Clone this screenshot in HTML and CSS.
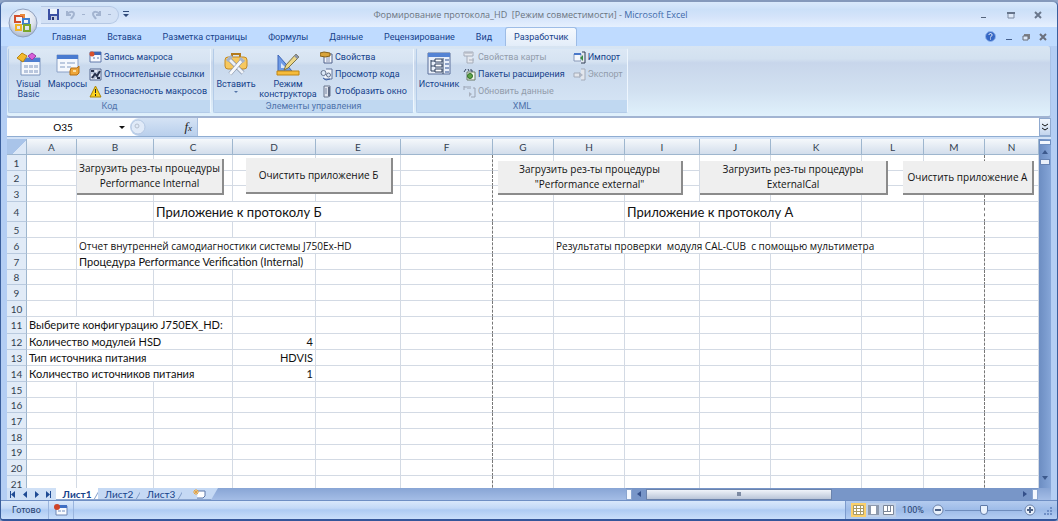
FILE: index.html
```html
<!DOCTYPE html>
<html lang="ru">

<head>
  <meta charset="UTF-8" />
  <meta name="viewport" content="width=device-width, initial-scale=1.0" />
  <title>Формирование протокола_HD - Microsoft Excel</title>
  <link rel="stylesheet" href="styles.css">
</head>

<body>
  <div class="window">
    <button class="office" aria-label="Office">
      <svg width="30" height="30" viewBox="0 0 30 30">
        <defs>
          <radialGradient id="orb" cx="50%" cy="30%" r="70%">
            <stop offset="0" stop-color="#fff" />
            <stop offset="0.6" stop-color="#dfe4ee" />
            <stop offset="1" stop-color="#a9b6cd" />
          </radialGradient>
        </defs>
        <circle cx="15" cy="15" r="14" fill="url(#orb)" stroke="#8d9fbe" />
        <g fill="none" stroke-width="2">
          <path d="M13 14H7V8h8v3" stroke="#d2502c" />
          <path d="M12 7h4v4" stroke="#e8893a" />
          <rect x="15" y="11" width="6" height="5" stroke="#3f7fcf" />
          <rect x="8" y="17" width="5" height="5" stroke="#f0b429" />
          <rect x="16" y="17" width="6" height="6" stroke="#7aa62c" />
        </g>
      </svg>
    </button>

    <header class="titlebar">
      <div class="quick">
        <button aria-label="Сохранить"><svg width="11" height="11" viewBox="0 0 11 11">
            <path d="M0 0h11v11H0z" fill="#3b4fa3" />
            <path d="M2 0h7v5H2z" fill="#eef3fc" />
            <path d="M3 7h6v4H3z" fill="#c5cce0" />
            <path d="M4 8h2v3H4z" fill="#27326f" />
          </svg></button>
        <button aria-label="Отменить"><svg width="11" height="11" viewBox="0 0 11 11">
            <path d="M2 2v4h4M2 6c2-4 7-4 7-1 0 2-2 3-3 5" fill="none" stroke="#a3b4d0" stroke-width="2" />
          </svg></button>
        <i class="dot"></i>
        <button aria-label="Вернуть"><svg width="11" height="11" viewBox="0 0 11 11">
            <path d="M9 2v4H5M9 6C7 2 2 2 2 5c0 2 2 3 3 5" fill="none" stroke="#a3b4d0" stroke-width="2" />
          </svg></button>
        <i class="dot"></i>
      </div>
      <button class="quick-more" aria-label="Настройка панели"><svg width="6" height="7" viewBox="0 0 6 7">
          <path d="M0 0h6v1H0zM0 3h6L3 6z" fill="#2f4a7a" />
        </svg></button>
      <h1>Формирование протокола_HD&nbsp; [Режим совместимости] - <span>Microsoft Excel</span></h1>
      <div class="win-buttons">
        <button aria-label="Свернуть"><svg width="8" height="8" viewBox="0 0 8 8">
            <path d="M1 6h5v1H1z" fill="#56657c" />
          </svg></button>
        <button aria-label="Развернуть"><svg width="8" height="8" viewBox="0 0 8 8">
            <path d="M1 2h6v5H1z" fill="#dfe9f8" stroke="#7c8aa0" />
            <path d="M0 1h8v2H0z" fill="#66748a" />
          </svg></button>
        <button aria-label="Закрыть"><svg width="8" height="8" viewBox="0 0 8 8">
            <path d="M1 1l6 6M7 1L1 7" stroke="#6a778c" stroke-width="2" />
          </svg></button>
      </div>
    </header>

    <nav class="tabs">
      <button>Главная</button>
      <button>Вставка</button>
      <button>Разметка страницы</button>
      <button>Формулы</button>
      <button>Данные</button>
      <button>Рецензирование</button>
      <button>Вид</button>
      <button class="active">Разработчик</button>
      <div class="doc-buttons">
        <button aria-label="Справка"><svg width="11" height="11" viewBox="0 0 11 11">
            <circle cx="5.500" cy="5.500" r="5" fill="#3567c4" stroke="#8fb2ea" />
            <path d="M4 4c0-2 3-2 3 0 0 1-1 1-1.500 2.500M5.500 7.500v1" fill="none" stroke="#fff" />
          </svg></button>
        <button aria-label="Свернуть книгу"><svg width="8" height="8" viewBox="0 0 8 8">
            <path d="M1 6h6v1H1z" fill="#45608e" />
          </svg></button>
        <button aria-label="Восстановить книгу"><svg width="8" height="8" viewBox="0 0 8 8">
            <path d="M2 1h6v5H2z" fill="#7c7f86" />
            <path d="M1 3h5v4H1z" fill="#dce8f8" stroke="#6b6f78" />
          </svg></button>
        <button aria-label="Закрыть книгу"><svg width="8" height="8" viewBox="0 0 8 8">
            <path d="M1 1l6 6M7 1L1 7" stroke="#6a6f7c" stroke-width="2" />
          </svg></button>
      </div>
    </nav>

    <section class="ribbon">
      <div class="group group-code">
        <div class="tools">
          <button class="big">
            <svg width="24" height="24" viewBox="0 0 24 24">
              <path d="M4 6h19v17H4z" fill="#f5f8fd" stroke="#7f96bd" />
              <path d="M4 6h19v4H4z" fill="#4f7fd0" />
              <path d="M7 13h4v3H7zM12 13h4v3h-4zM17 13h4v3h-4zM7 18h4v3H7zM12 18h4v3h-4zM17 18h4v3h-4z" fill="#b9c6dd" />
              <path d="M0 6l5-5 5 3-4 6z" fill="#f2b92c" stroke="#b98310" />
              <path d="M11 4l4-3 4 3-4 4z" fill="#d65fd9" stroke="#9b3aa6" />
            </svg>
            Visual<br>Basic
          </button>
          <button class="big">
            <svg width="24" height="24" viewBox="0 0 24 24">
              <path d="M1 3h21v17H1z" fill="#f5f8fd" stroke="#8ba1c6" />
              <path d="M1 3h21v4H1z" fill="#4a7bd0" />
              <path d="M4 10h5v2H4zM11 10h8v2h-8zM4 14h5v2H4zM11 14h4v2h-4z" fill="#bccae0" />
              <path d="M15 16h6l2-2v7l-2 2h-7v-4z" fill="#eea63a" stroke="#b56f12" />
              <path d="M17 18h3v2h-3z" fill="#fbe0a5" />
            </svg>
            Макросы
          </button>
          <div class="small">
            <button><svg width="13" height="13" viewBox="0 0 13 13">
                <path d="M1 1h11v10H1z" fill="#f7f9fd" stroke="#6079aa" />
                <path d="M4 1h8v3H4z" fill="#3e67b5" />
                <path d="M4 6h2v2H4zM8 6h2v2H8z" fill="#a9b9d6" />
                <circle cx="3" cy="3" r="2.500" fill="#d8512c" />
              </svg>Запись макроса</button>
            <button><svg width="13" height="13" viewBox="0 0 13 13">
                <path d="M1 1h11v11H1z" fill="#e6ebf5" stroke="#54678f" />
                <path d="M1 5h11M5 1v11M9 1v11M1 9h11" stroke="#97a5c1" />
                <path d="M3 10l3-4 2 2 3-5M2 3h3M8 10h3" fill="none" stroke="#27304a" stroke-width="2" />
              </svg>Относительные ссылки</button>
            <button><svg width="13" height="13" viewBox="0 0 13 13">
                <path d="M6.500 1L12 12H1z" fill="#fbd21e" stroke="#a98308" />
                <path d="M6 4h1v4H6zM6 9h1v2H6z" fill="#222" />
              </svg>Безопасность макросов</button>
          </div>
        </div>
        <h2>Код</h2>
      </div>

      <div class="group group-controls">
        <div class="tools">
          <button class="big">
            <svg width="24" height="24" viewBox="0 0 24 24">
              <path d="M8 5V2h8v3" fill="none" stroke="#b37a1c" stroke-width="2" />
              <rect x="1" y="5" width="22" height="12" rx="3" fill="#f6c860" stroke="#c38a24" />
              <path d="M4 6l15 15" stroke="#76849c" stroke-width="4" />
              <path d="M4 6l15 15" stroke="#eef2f8" stroke-width="3" />
              <path d="M19 7L6 22" stroke="#76849c" stroke-width="4" />
              <path d="M19 7L6 22" stroke="#f7f9fc" stroke-width="3" />
              <path d="M3 9l5-5M16 6l4 4" stroke="#a8b4c8" stroke-width="3" />
            </svg>
            Вставить
            <i class="caret"></i>
          </button>
          <button class="big">
            <svg width="24" height="24" viewBox="0 0 24 24">
              <path d="M2 3v16h14z" fill="#6f9be6" stroke="#3f67b8" />
              <path d="M5 11v5h5z" fill="#d9e7fb" />
              <path d="M1 19h22v4H1z" fill="#f6bc3c" stroke="#c08616" />
              <path d="M20 2l3 3L12 16l-4 2 2-5z" fill="#ecd789" stroke="#7b7345" />
              <path d="M20 2l3 3-2 2-3-3z" fill="#8a93a8" />
            </svg>
            Режим<br>конструктора
          </button>
          <div class="small">
            <button><svg width="13" height="13" viewBox="0 0 13 13">
                <path d="M4 3h8v9H4z" fill="#f4f6fb" stroke="#4f618b" />
                <path d="M6 6h4M6 8h4M6 10h4" stroke="#8796b7" />
                <path d="M0 2l4-1 6 1v3l-5 1-5-1z" fill="#d9a43a" stroke="#86611a" />
              </svg>Свойства</button>
            <button><svg width="13" height="13" viewBox="0 0 13 13">
                <path d="M6 1h6v10H4" fill="#f2f5fb" stroke="#5f729b" />
                <circle cx="3.500" cy="5" r="2.500" fill="#dbe8f8" stroke="#66738c" />
                <circle cx="8.500" cy="7" r="2" fill="#dbe8f8" stroke="#66738c" />
                <path d="M3 10l3 2 4-1" fill="none" stroke="#3b5ea5" />
              </svg>Просмотр кода</button>
            <button><svg width="13" height="13" viewBox="0 0 13 13">
                <path d="M4 1h6v10l-2 1H4z" fill="#dfe4ee" stroke="#68748c" />
                <path d="M8 2h2v9H8z" fill="#5f6b84" />
                <path d="M5 4h2M5 6h2M5 8h2" stroke="#7785a2" />
              </svg>Отобразить окно</button>
          </div>
        </div>
        <h2>Элементы управления</h2>
      </div>

      <div class="group group-xml">
        <div class="tools">
          <button class="big">
            <svg width="24" height="24" viewBox="0 0 24 24">
              <path d="M1 1h22v21H1z" fill="#e9eff9" stroke="#5b6f99" />
              <path d="M1 1h22v4H1z" fill="#5483d4" />
              <path d="M4 8v11M4 9h4M4 14h4M4 19h4M16 6v16" fill="none" stroke="#31435f" />
              <path d="M8 7h7v3H8zM8 12h7v3H8zM8 17h7v3H8z" fill="#fff" stroke="#2e3e5c" />
              <path d="M18 8h4M18 12h4M18 16h4M18 20h4" stroke="#8ca0c6" stroke-width="2" />
            </svg>
            Источник
          </button>
          <div class="small">
            <button disabled><svg width="13" height="13" viewBox="0 0 13 13">
                <path d="M1 1h9v4H1zM4 5v7h6V7" fill="#e6e9ef" stroke="#a6adba" />
                <path d="M2 2h7M6 9h5" stroke="#a6adba" />
              </svg>Свойства карты</button>
            <button><svg width="13" height="13" viewBox="0 0 13 13">
                <path d="M4 4h8v8H4z" fill="#f2f6ec" stroke="#6b7b66" />
                <circle cx="7" cy="8" r="2.500" fill="#5fa447" stroke="#2f6f28" />
                <path d="M1 4l2-3M5 1l1 2M8 1v2h2" fill="none" stroke="#34435f" />
              </svg>Пакеты расширения</button>
            <button disabled><svg width="13" height="13" viewBox="0 0 13 13">
                <path d="M1 1v4M1 2h3M5 1v3M7 1v3M10 3h2v9H8" fill="none" stroke="#9aa3b3" />
                <path d="M6 7l3 2-3 3z" fill="#a9b1bf" />
              </svg>Обновить данные</button>
          </div>
          <div class="small">
            <button><svg width="13" height="13" viewBox="0 0 13 13">
                <path d="M1 3h7v7H1z" fill="#f4f7fc" stroke="#8798b8" />
                <path d="M1 2h7v2H1z" fill="#4a78c9" />
                <path d="M9 1h3v11H8" fill="#e3e8f1" stroke="#2f3c55" />
                <path d="M10 4L7 7l3 3z" fill="#3a8b45" />
              </svg>Импорт</button>
            <button disabled><svg width="13" height="13" viewBox="0 0 13 13">
                <path d="M1 5h6v4H1zM8 1h4v11H8" fill="#e3e6ec" stroke="#a3abb9" />
                <path d="M6 4l4 3-4 3z" fill="#b0b7c4" />
              </svg>Экспорт</button>
          </div>
        </div>
        <h2>XML</h2>
      </div>
    </section>

    <div class="formula-bar">
      <div class="name-box">
        <input type="text" value="O35" aria-label="Имя">
        <i class="caret"></i>
      </div>
      <div class="fx">
        <svg width="16" height="16" viewBox="0 0 16 16">
          <circle cx="8" cy="8" r="7" fill="#e0eaf8" stroke="#b4c7e2" />
          <circle cx="7" cy="7" r="2" fill="none" stroke="#b5bfce" />
        </svg>
        <em>f<small>x</small></em>
      </div>
      <input class="formula" type="text" aria-label="Формула">
      <button class="expand" aria-label="Развернуть строку формул"><svg width="6" height="8" viewBox="0 0 6 8">
          <path d="M0 1l3 2 3-2M0 5l3 2 3-2" fill="none" stroke="#111" stroke-width="1" />
        </svg></button>
    </div>

    <main class="book">
      <div class="sheet">
        <table>
          <colgroup>
            <col class="w-head"><col class="w-a"><col class="w-b"><col class="w-c"><col class="w-d"><col class="w-e">
            <col class="w-f"><col class="w-g"><col class="w-h"><col class="w-i"><col class="w-j"><col class="w-k">
            <col class="w-l"><col class="w-m"><col>
          </colgroup>
          <thead>
            <tr>
              <th class="corner"></th><th>A</th><th>B</th><th>C</th><th>D</th><th>E</th><th>F</th><th>G</th><th>H</th>
              <th>I</th><th>J</th><th>K</th><th>L</th><th>M</th><th>N</th>
            </tr>
          </thead>
          <tbody>
            <tr><th>1</th><td></td><td></td><td></td><td></td><td></td><td class="break"></td><td></td><td></td><td></td><td></td><td></td><td></td><td class="break"></td><td></td></tr>
            <tr class="low"><th>2</th><td></td><td></td><td></td><td></td><td></td><td class="break"></td><td></td><td></td><td></td><td></td><td></td><td></td><td class="break"></td><td></td></tr>
            <tr><th>3</th><td></td><td></td><td></td><td></td><td></td><td class="break"></td><td></td><td></td><td></td><td></td><td></td><td></td><td class="break"></td><td></td></tr>
            <tr class="heading"><th>4</th><td></td><td></td><td colspan="3">Приложение к протоколу Б</td><td class="break"></td><td></td><td></td><td colspan="3">Приложение к протоколу А</td><td></td><td class="break"></td><td></td></tr>
            <tr><th>5</th><td></td><td></td><td></td><td></td><td></td><td class="break"></td><td></td><td></td><td></td><td></td><td></td><td></td><td class="break"></td><td></td></tr>
            <tr class="note"><th>6</th><td></td><td colspan="4">Отчет внутренней самодиагностики системы J750Ex-HD</td><td class="break"></td><td></td><td colspan="5">Результаты проверки&nbsp; модуля CAL-CUB&nbsp; с помощью мультиметра</td><td class="break"></td><td></td></tr>
            <tr><th>7</th><td></td><td colspan="3">Процедура Performance Verification (Internal)</td><td></td><td class="break"></td><td></td><td></td><td></td><td></td><td></td><td></td><td class="break"></td><td></td></tr>
            <tr class="low"><th>8</th><td></td><td></td><td></td><td></td><td></td><td class="break"></td><td></td><td></td><td></td><td></td><td></td><td></td><td class="break"></td><td></td></tr>
            <tr><th>9</th><td></td><td></td><td></td><td></td><td></td><td class="break"></td><td></td><td></td><td></td><td></td><td></td><td></td><td class="break"></td><td></td></tr>
            <tr><th>10</th><td></td><td></td><td></td><td></td><td></td><td class="break"></td><td></td><td></td><td></td><td></td><td></td><td></td><td class="break"></td><td></td></tr>
            <tr class="high"><th>11</th><td colspan="3">Выберите конфигурацию J750EX_HD:</td><td></td><td></td><td class="break"></td><td></td><td></td><td></td><td></td><td></td><td></td><td class="break"></td><td></td></tr>
            <tr><th>12</th><td colspan="3">Количество модулей HSD</td><td class="value">4</td><td></td><td class="break"></td><td></td><td></td><td></td><td></td><td></td><td></td><td class="break"></td><td></td></tr>
            <tr><th>13</th><td colspan="3">Тип источника питания</td><td class="value">HDVIS</td><td></td><td class="break"></td><td></td><td></td><td></td><td></td><td></td><td></td><td class="break"></td><td></td></tr>
            <tr><th>14</th><td colspan="3">Количество источников питания</td><td class="value">1</td><td></td><td class="break"></td><td></td><td></td><td></td><td></td><td></td><td></td><td class="break"></td><td></td></tr>
            <tr><th>15</th><td></td><td></td><td></td><td></td><td></td><td class="break"></td><td></td><td></td><td></td><td></td><td></td><td></td><td class="break"></td><td></td></tr>
            <tr class="low"><th>16</th><td></td><td></td><td></td><td></td><td></td><td class="break"></td><td></td><td></td><td></td><td></td><td></td><td></td><td class="break"></td><td></td></tr>
            <tr><th>17</th><td></td><td></td><td></td><td></td><td></td><td class="break"></td><td></td><td></td><td></td><td></td><td></td><td></td><td class="break"></td><td></td></tr>
            <tr><th>18</th><td></td><td></td><td></td><td></td><td></td><td class="break"></td><td></td><td></td><td></td><td></td><td></td><td></td><td class="break"></td><td></td></tr>
            <tr class="low"><th>19</th><td></td><td></td><td></td><td></td><td></td><td class="break"></td><td></td><td></td><td></td><td></td><td></td><td></td><td class="break"></td><td></td></tr>
            <tr><th>20</th><td></td><td></td><td></td><td></td><td></td><td class="break"></td><td></td><td></td><td></td><td></td><td></td><td></td><td class="break"></td><td></td></tr>
            <tr><th>21</th><td></td><td></td><td></td><td></td><td></td><td class="break"></td><td></td><td></td><td></td><td></td><td></td><td></td><td class="break"></td><td></td></tr>
          </tbody>
        </table>

        <!-- кнопки макросов лежат поверх ячеек -->
        <button class="macro load-internal">Загрузить рез-ты процедуры<br>Performance Internal</button>
        <button class="macro clear-b">Очистить приложение Б</button>
        <button class="macro load-external">Загрузить рез-ты процедуры<br>"Performance external"</button>
        <button class="macro load-cal">Загрузить рез-ты процедуры<br>ExternalCal</button>
        <button class="macro clear-a">Очистить приложение А</button>
      </div>
      <div class="vscroll">
        <i class="split"></i>
        <i class="up"></i>
        <i class="thumb"></i>
        <i class="down"></i>
      </div>
    </main>

    <div class="sheet-bar">
      <div class="sheet-nav">
        <svg width="44" height="7" viewBox="0 0 44 7" fill="#1f4b94">
          <path d="M1 0h1v7H1zM6 0v7L2 3.500zM18 0v7l-4-3.500zM26 0v7l4-3.500zM37 0v7l4-3.500zM41 0h1v7h-1z" />
        </svg>
      </div>
      <button class="sheet-tab active">Лист1</button>
      <button class="sheet-tab">Лист2</button>
      <button class="sheet-tab">Лист3</button>
      <button class="sheet-tab new" aria-label="Вставить лист"><svg width="14" height="10" viewBox="0 0 14 10">
          <path d="M5 2h7v5l-2 2H4" fill="#fff" stroke="#5b76a8" />
          <path d="M3 0v6M0 3h6M1 1l4 4M5 1L1 5" stroke="#e8a33b" />
        </svg></button>
      <div class="hscroll">
        <i class="split"></i>
        <i class="left"></i>
        <div class="track"><div class="thumb"></div></div>
        <i class="right"></i>
        <i class="split"></i>
      </div>
    </div>

    <footer class="status">
      <span class="ready">Готово</span>
      <button class="record" aria-label="Запись макроса"><svg width="14" height="12" viewBox="0 0 14 12">
          <path d="M2 2h11v9H2z" fill="#f8fafe" stroke="#7088b5" />
          <path d="M5 1h8v3H5z" fill="#3f6fc4" />
          <path d="M4 6h3v2H4zM8 6h3v2H8z" fill="#b4c3de" />
          <circle cx="3" cy="3" r="3" fill="#cf4427" />
        </svg></button>
      <div class="view">
        <button class="on" aria-label="Обычный"><svg width="11" height="10" viewBox="0 0 11 10">
            <path d="M0.500 0.500h10v9h-10zM0 3.500h11M0 6.500h11M3.500 0v10M7.500 0v10" fill="#fff" stroke="#a89a68" />
          </svg></button>
        <button aria-label="Разметка"><svg width="11" height="10" viewBox="0 0 11 10">
            <path d="M0 0h11v10H0z" fill="#8e9aae" />
            <path d="M3 1h5v8H3z" fill="#fff" />
          </svg></button>
        <button aria-label="Страничный"><svg width="11" height="10" viewBox="0 0 11 10">
            <path d="M0.500 0.500h10v9h-10z" fill="#fff" stroke="#7b8698" />
            <path d="M4.500 0v6M7.500 0v6M0 6.500h8" fill="none" stroke="#7b8698" />
          </svg></button>
        <span class="percent">100%</span>
        <button class="round" aria-label="Мельче"><svg width="12" height="12" viewBox="0 0 12 12">
            <circle cx="6" cy="6" r="5" fill="#e8f0fb" stroke="#6d84ab" />
            <path d="M3 5h6v2H3z" fill="#4d6287" />
          </svg></button>
        <input type="range" min="0" max="100" value="50" aria-label="Масштаб">
        <button class="round" aria-label="Крупнее"><svg width="12" height="12" viewBox="0 0 12 12">
            <circle cx="6" cy="6" r="5" fill="#e8f0fb" stroke="#6d84ab" />
            <path d="M3 5h6v2H3zM5 3h2v6H5z" fill="#4d6287" />
          </svg></button>
        <svg class="grip" width="9" height="9" viewBox="0 0 9 9">
          <path d="M6 0h2v2H6zM3 3h2v2H3zM6 3h2v2H6zM0 6h2v2H0zM3 6h2v2H3zM6 6h2v2H6z" fill="#6f8fc6" />
        </svg>
      </div>
    </footer>
  </div>
</body>

</html>
```

FILE: styles.css
```css
* {
  box-sizing: border-box;
}

body {
  margin: 0;
  background: #8fa5c8;
  font-family: Roboto, 'Open Sans', sans-serif;
  font-size: 9px;
  line-height: 10px;
  color: #15428b;
}

button {
  display: flex;
  align-items: center;
  justify-content: center;
  margin: 0;
  padding: 0;
  border: none;
  background: none;
  color: inherit;
  font: inherit;
  white-space: nowrap;
}

input {
  min-width: 0;
  margin: 0;
  padding: 0;
  border: none;
  background: none;
  font: inherit;
}

svg {
  display: block;
  flex: none;
}

.window {
  position: relative;
  display: flex;
  flex-direction: column;
  height: 100vh;
  border: 1px solid #3a5e9c;
  border-top: 2px solid #8499bb;
  border-bottom: 2px solid #34569a;
  border-radius: 6px 6px 4px 4px;
  background: #b4cef4;
  overflow: hidden;
}

/* заголовок окна */
.titlebar {
  display: flex;
  align-items: center;
  flex: none;
  height: 25px;
  padding: 0 8px 0 40px;
  background: linear-gradient(#d9e9fb, #cbe0f8 30%, #d5e4fa 60%, #e6f0fe);
}

.office {
  position: absolute;
  left: 7px;
  top: 6px;
}

.quick {
  display: flex;
  align-items: center;
  gap: 6px;
  width: 78px;
  height: 18px;
  padding-left: 7px;
  border: 1px solid #b5c8e4;
  border-left: none;
  border-radius: 0 9px 9px 0;
  background: #d3e1f5;
}

.dot {
  width: 3px;
  height: 1px;
  background: #a3b4d0;
}

.quick-more {
  width: 14px;
}

.titlebar h1 {
  flex: 1;
  margin: 0;
  padding-right: 52px;
  font-family: 'Open Sans', sans-serif;
  font-size: 9px;
  font-weight: normal;
  line-height: 12px;
  text-align: center;
  color: #6b7580;
  white-space: pre;
}

.titlebar h1 span {
  color: #3f6aaa;
}

.win-buttons {
  display: flex;
  gap: 19px;
  padding-right: 7px;
}

/* вкладки ленты */
.tabs {
  display: flex;
  align-items: stretch;
  flex: none;
  gap: 5px;
  height: 19px;
  padding: 0 10px 0 43px;
  background: #bfdbff;
}

.tabs > button {
  padding: 0 8px;
}

.tabs .active {
  border: 1px solid #9dbce6;
  border-bottom: none;
  border-radius: 3px 3px 0 0;
  background: linear-gradient(#f5f9fe, #e3edf9);
}

.doc-buttons {
  display: flex;
  gap: 9px;
  margin-left: auto;
}

/* лента */
.ribbon {
  display: flex;
  flex: none;
  gap: 2px;
  height: 72px;
  margin: 0 6px;
  padding: 2px 1px 3px;
  border-bottom: 2px solid #a2b4d2;
  border-right: 1px solid #a9c2e6;
  border-radius: 3px;
  background: linear-gradient(#d8e5f2, #d3e1f0 18%, #c8d6eb 24%, #d2e1f1 65%, #e0f1fc);
}

.group {
  display: flex;
  flex-direction: column;
  border: 1px solid #b3cbe8;
  border-top-color: #d6e5f5;
  border-right-color: #eef6fe;
  border-radius: 2px;
  background: linear-gradient(#dce8f5, #d6e3f2 20%, #c9d9ed 26%, #d7e6f6);
}

.group-code {
  width: 203px;
}

.group-controls {
  width: 201px;
}

.group-xml {
  width: 212px;
}

.tools {
  display: flex;
  flex: 1;
  min-height: 0;
}

.group h2 {
  flex: none;
  margin: 0;
  height: 12px;
  font-size: 9px;
  font-weight: normal;
  line-height: 12px;
  text-align: center;
  color: #4f73ab;
  background: #c0d8f1;
}

.big {
  flex-direction: column;
  justify-content: flex-start;
  flex: none;
  width: 44px;
  padding-top: 3px;
  line-height: 10px;
}

.big svg {
  margin-bottom: 3px;
}

.group-code .big {
  width: 39px;
}

.group-controls .big + .big {
  width: 60px;
}

.small {
  display: flex;
  flex-direction: column;
  gap: 3px;
  padding: 1px 0 0 2px;
}

.small + .small {
  padding-left: 8px;
}

.small button {
  justify-content: flex-start;
  gap: 2px;
  height: 14px;
}

.small button:disabled {
  color: #929cab;
}

.caret {
  border: 3px solid transparent;
  border-top-color: #111;
  border-bottom: none;
}

.big .caret {
  margin-top: 2px;
  border-width: 2px;
  border-top-color: #5474a8;
}

/* строка формул */
.formula-bar {
  display: flex;
  flex: none;
  height: 18px;
  margin: 0 6px;
  background: #fff;
}

.name-box {
  display: flex;
  align-items: center;
  width: 123px;
  padding-right: 5px;
  font-family: Lato, sans-serif;
  font-size: 10px;
}

.name-box input {
  flex: 1;
  text-align: center;
}

.fx {
  display: flex;
  align-items: center;
  justify-content: space-between;
  width: 68px;
  padding-right: 5px;
  border-right: 1px solid #a9c0e0;
  border-radius: 9px 0 0 9px;
  background: linear-gradient(#d5e3f5, #b9cfec);
}

.fx em {
  font-family: 'Liberation Serif', serif;
  font-size: 13px;
  color: #222;
}

.fx small {
  font-size: 9px;
}

.formula {
  flex: 1;
}

.expand {
  width: 12px;
  border: 1px solid #8fa9cf;
  background: linear-gradient(#f2f7fd, #c3d5ee);
}

/* лист */
.book {
  display: flex;
  flex: 1;
  min-height: 0;
  margin: 0 6px;
  padding-top: 2px;
  border-top: 1px solid #8fadd2;
  background: #d3e2f6;
}

.sheet {
  position: relative;
  flex: 1;
  min-width: 0;
  overflow: hidden;
  background: #fff;
  font-family: Lato, 'Open Sans', sans-serif;
  font-size: 11px;
  line-height: 14px;
  color: #111;
}

table {
  width: 100%;
  border-collapse: separate;
  border-spacing: 0;
  table-layout: fixed;
}

.w-head { width: 20px; }
.w-a { width: 50px; }
.w-b { width: 77px; }
.w-c { width: 79px; }
.w-d { width: 83px; }
.w-e { width: 85px; }
.w-f { width: 92px; }
.w-g { width: 61px; }
.w-h { width: 71px; }
.w-i { width: 75px; }
.w-j { width: 71px; }
.w-k { width: 91px; }
.w-l { width: 62px; }
.w-m { width: 61px; }

th {
  padding: 0;
  border-right: 1px solid #9eb6ce;
  border-bottom: 1px solid #b9cadf;
  background: #e1ebf7;
  font-family: Lato, sans-serif;
  font-size: 10px;
  font-weight: normal;
  color: #333f50;
}

thead th {
  height: 16px;
  border-bottom-color: #9eb6ce;
  background: linear-gradient(#f5f8fb, #d3deec);
}

.corner {
  background: linear-gradient(135deg, #a9c4e9 60%, #dce8f7 61%);
}

td {
  padding: 0 2px;
  border-right: 1px solid #d3dae4;
  border-bottom: 1px solid #d3dae4;
  white-space: nowrap;
}

td.break {
  border-right: 1px dashed #777;
}

tbody tr {
  height: 16px;
}

tbody .low {
  height: 15px;
}

tbody .high {
  height: 17px;
}

tbody .heading {
  height: 20px;
}

.heading td {
  font-size: 13px;
}

.note td,
.macro {
  font-family: 'Open Sans', sans-serif;
  font-size: 10px;
}

.value {
  text-align: right;
}

.macro {
  position: absolute;
  top: 22px;
  height: 34px;
  border-right: 2px solid #8b8b8b;
  border-bottom: 2px solid #8b8b8b;
  background: #efefef;
  line-height: 15px;
}

.load-internal {
  left: 70px;
  top: 20px;
  width: 147px;
  height: 36px;
}

.clear-b {
  left: 239px;
  top: 19px;
  width: 147px;
  height: 36px;
}

.load-external {
  left: 491px;
  width: 185px;
}

.load-cal {
  left: 693px;
  width: 188px;
}

.clear-a {
  left: 896px;
  width: 131px;
}

/* полосы прокрутки */
.vscroll {
  display: flex;
  flex-direction: column;
  align-items: center;
  width: 12px;
  padding: 1px 0 3px;
  background: linear-gradient(to right, #6c8dc2, #86a6d8);
}

.vscroll .split {
  width: 12px;
  height: 5px;
  border: 1px solid #6f8fc0;
  background: #f2f7fe;
}

.up,
.down {
  margin: 5px 0;
  border: 3px solid transparent;
  border-bottom: 4px solid #3c598c;
  border-top: none;
}

.vscroll .thumb {
  width: 10px;
  height: 6px;
  border: 1px solid #6683b4;
  background: #e9f0fa;
}

.down {
  margin-top: auto;
  border-top: 4px solid #3c598c;
  border-bottom: none;
}

.sheet-bar {
  display: flex;
  flex: none;
  height: 12px;
  margin: 0 6px;
  background: linear-gradient(#88a5d5, #a4bde6);
}

.sheet-nav {
  display: flex;
  align-items: center;
  width: 49px;
  padding-left: 2px;
  background: #cfe0f6;
}

.sheet-tab {
  position: relative;
  width: 42px;
  border-bottom: 1px solid #8aa5cf;
  background: #c5d9f4;
  font-family: Lato, 'Open Sans', sans-serif;
  font-size: 10px;
}

/* косой край ярлычка */
.sheet-tab::after {
  content: '';
  position: absolute;
  top: 0;
  right: 0;
  width: 6px;
  height: 11px;
  border-right: 1px solid #7f9cc9;
  transform: skewX(-30deg);
}

.sheet-tab.active {
  background: #fff;
  font-weight: bold;
}

.sheet-tab.new {
  width: 36px;
  clip-path: polygon(0 0, 100% 0, 29px 100%, 0 100%);
}

.sheet-tab.new::after {
  border-right: none;
}

.hscroll {
  display: flex;
  align-items: center;
  width: calc(40% - 6px);
  margin-left: auto;
  margin-right: 13px;
  background: #7896c8;
}

.hscroll .split {
  width: 6px;
  height: 11px;
  border: 1px solid #8aa5cf;
  background: #f4f8fe;
}

.left,
.right {
  margin: 0 5px;
  border: 3px solid transparent;
  border-right: 4px solid #34508a;
  border-left: none;
}

.right {
  border-left: 4px solid #34508a;
  border-right: none;
}

.track {
  flex: 1;
}

.hscroll .thumb {
  width: 50%;
  height: 11px;
  border: 1px solid #6b83ac;
  background: linear-gradient(90deg, transparent 49%, #7d8ba3 49%, #7d8ba3 51%, transparent 51%) center / 100% 4px no-repeat, linear-gradient(#f0f4fa, #b9c5d8);
}

/* строка состояния */
.status {
  display: flex;
  align-items: stretch;
  flex: 0 0 19px;
  padding-left: 11px;
  border-top: 1px solid #6f8fc4;
  background: linear-gradient(#d9e8fb, #c3d9f7 40%, #aecbf3 50%, #c9defa);
}

.status span {
  align-self: center;
}

.ready {
  width: 36px;
  color: #26406e;
}

.record {
  width: 26px;
  border-left: 1px solid #9ab5de;
  border-right: 1px solid #9ab5de;
}

.view {
  display: flex;
  align-items: center;
  margin-left: auto;
  padding: 0 4px 0 5px;
  border-left: 1px solid #7d9bcd;
  background: linear-gradient(#b3cbef, #9dbbe8 50%, #b4cdf2);
}

.view > button {
  width: 15px;
  height: 14px;
  background: #c0d0e8;
}

.view .on {
  background: #fbd06b;
}

.percent {
  width: 34px;
  text-align: center;
  color: #26406e;
}

.view .round {
  background: none;
}

.view input {
  width: 77px;
  height: 12px;
  appearance: none;
  background: linear-gradient(#6f8dbd, #6f8dbd) center / 100% 1px no-repeat;
}

.view input::-webkit-slider-thumb {
  appearance: none;
  width: 8px;
  height: 10px;
  border: 1px solid #5f7aa8;
  border-radius: 1px 1px 4px 4px;
  background: #e9f1fc;
}

.grip {
  align-self: flex-end;
  margin: 0 0 3px 7px;
}
```
